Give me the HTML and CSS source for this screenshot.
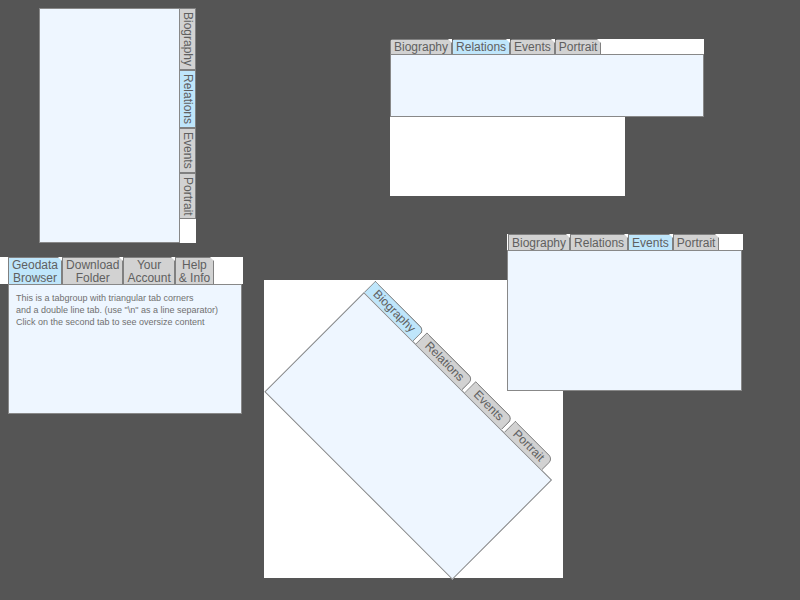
FILE: index.html
```html
<!DOCTYPE html>
<html>
<head>
<meta charset="utf-8">
<link rel="stylesheet" href="styles.css">
</head>
<body>
<div class="desk">

  <div class="win w1">
    <div class="panel vpanel"></div>
    <div class="vtabs">
      <div class="vtab">Biography</div>
      <div class="vtab active">Relations</div>
      <div class="vtab">Events</div>
      <div class="vtab">Portrait</div>
    </div>
  </div>

  <div class="win w2">
    <div class="group g2">
      <div class="tabbar">
        <div class="tab cut2">Biography</div>
        <div class="tab cut2 active">Relations</div>
        <div class="tab cut2">Events</div>
        <div class="tab cut2">Portrait</div>
      </div>
      <div class="panel p2"></div>
    </div>
  </div>

  <div class="win w3">
    <div class="group g3">
      <div class="tabbar">
        <div class="tab tab2l cut active">Geodata<br>Browser</div>
        <div class="tab tab2l cut">Download<br>Folder</div>
        <div class="tab tab2l cut">Your<br>Account</div>
        <div class="tab tab2l cut">Help<br>&amp; Info</div>
      </div>
      <div class="panel p3">
        <p class="note">This is a tabgroup with triangular tab corners<br>and a double line tab. (use "\n" as a line separator)<br>Click on the second tab to see oversize content</p>
      </div>
    </div>
  </div>

  <div class="win w5">
    <div class="group g5">
      <div class="tabbar rtabs">
        <div class="tab rtab active">Biography</div>
        <div class="tab rtab">Relations</div>
        <div class="tab rtab">Events</div>
        <div class="tab rtab">Portrait</div>
      </div>
      <div class="panel p5"></div>
    </div>
  </div>

  <div class="win w4">
    <div class="group g4">
      <div class="tabbar">
        <div class="tab tall cut">Biography</div>
        <div class="tab tall cut">Relations</div>
        <div class="tab tall cut active">Events</div>
        <div class="tab tall cut">Portrait</div>
      </div>
      <div class="panel p4"></div>
    </div>
  </div>

</div>
</body>
</html>
```
FILE: styles.css
```css
html, body {
  margin: 0;
  padding: 0;
  background: #555555;
}
.desk {
  position: relative;
  width: 800px;
  height: 600px;
  overflow: hidden;
  font-family: "Liberation Sans", Arial, sans-serif;
  font-size: 12px;
  color: #606060;
}
.win {
  position: absolute;
  background: #fff;
}
.panel {
  box-sizing: border-box;
  background: #eef6ff;
  border: 1px solid #888;
}
.group {
  display: flex;
  flex-direction: column;
}
.tabbar {
  display: flex;
  align-items: flex-end;
  background: #fff;
}
.tab {
  position: relative;
  box-sizing: border-box;
  background: #d2d2d2;
  border: 1px solid #808080;
  border-bottom: none;
  padding: 0 3px;
  line-height: 14px;
  white-space: nowrap;
}
.tab.active {
  background: #bfe6fb;
}
.cut::after, .cut2::after {
  content: "";
  position: absolute;
  top: -1px;
  right: -1px;
  width: 0;
  height: 0;
  border-top: 4px solid #fff;
  border-left: 4px solid transparent;
}
.cut2::before {
  content: "";
  position: absolute;
  top: -1px;
  left: -1px;
  width: 0;
  height: 0;
  border-top: 2px solid #555;
  border-right: 2px solid transparent;
}

/* widget 1: vertical tabs */
.w1 {
  left: 39px;
  top: 8px;
  width: 157px;
  height: 235px;
  display: flex;
}
.vpanel {
  width: 141px;
  height: 235px;
}
.vtabs {
  display: flex;
  flex-direction: column;
  width: 16px;
}
.vtab {
  writing-mode: vertical-rl;
  box-sizing: border-box;
  width: 16px;
  background: #d2d2d2;
  border: 1px solid #808080;
  border-left: none;
  padding: 3px 0;
  line-height: 15px;
  white-space: nowrap;
}
.vtab.active {
  background: #bfe6fb;
}

/* widget 2 */
.w2 {
  left: 390px;
  top: 39px;
  width: 235px;
  height: 157px;
}
.g2 {
  width: 314px;
}
.g2 .tab {
  padding-top: 1px;
  line-height: 13px;
}
.p2 {
  height: 63px;
}

/* widget 3 */
.w3 {
  left: 0;
  top: 257px;
  width: 243px;
  height: 27px;
}
.g3 {
  margin-left: 8px;
  width: 234px;
}
.tab2l {
  height: 27px;
  text-align: center;
  line-height: 13px;
  padding-top: 1px;
}
.p3 {
  height: 130px;
  padding: 7px 7px;
}
.note {
  margin: 0;
  font-size: 9px;
  line-height: 12px;
  color: #707070;
}

/* widget 4 */
.w4 {
  left: 507px;
  top: 234px;
  width: 236px;
  height: 16px;
}
.g4 {
  width: 236px;
}
.tall {
  line-height: 14px;
  padding-top: 1px;
}
.tab.tall:first-child {
  margin-left: 1px;
}
.p4 {
  width: 235px;
  height: 141px;
}

/* widget 5: rotated */
.w5 {
  left: 264px;
  top: 280px;
  width: 299px;
  height: 298px;
}
.g5 {
  position: absolute;
  left: 100px;
  top: -4px;
  width: 266px;
  transform-origin: 0 16px;
  transform: rotate(45deg);
}
.rtabs {
  background: transparent;
  gap: 3px;
}
.rtab {
  padding: 0 7px;
  line-height: 15px;
  border-top-right-radius: 6px;
}
.p5 {
  height: 141px;
}
```
